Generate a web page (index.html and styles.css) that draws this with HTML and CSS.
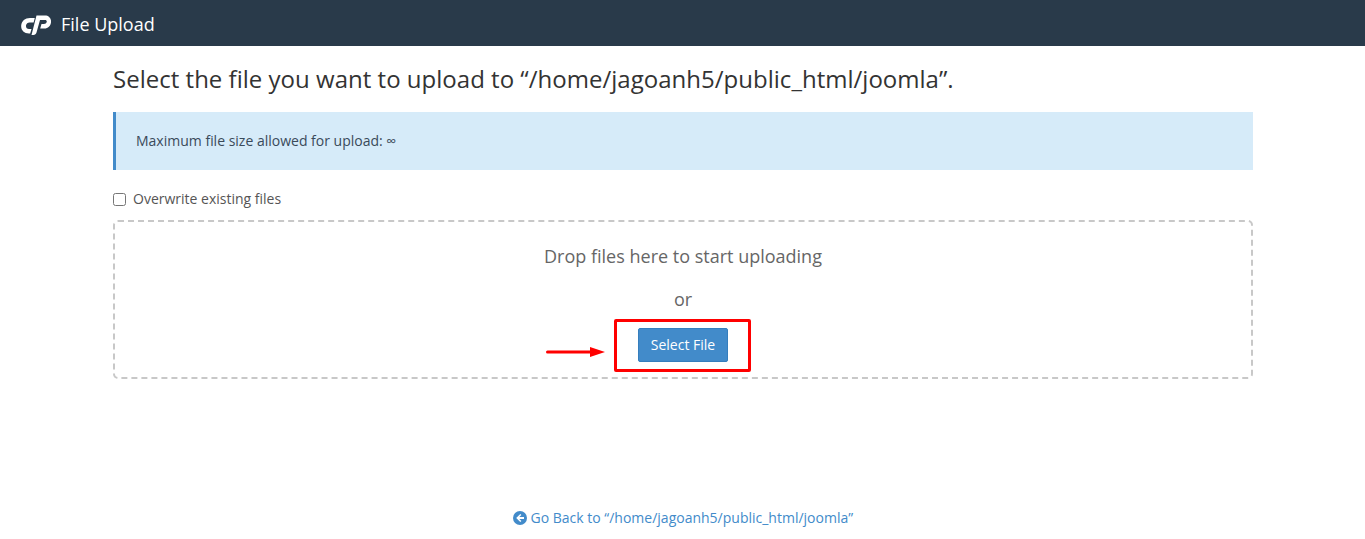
FILE: index.html
```html
<!DOCTYPE html>
<html lang="en">
<head>
  <meta charset="UTF-8" />
  <title>File Upload</title>
  <link rel="stylesheet" href="styles.css">
</head>
<body>
  <header class="topbar">
    <svg class="logo" viewBox="0 0 30 20" width="30" height="20" aria-hidden="true">
      <path fill="#fff" d="M13.800 3H9C4 3 .6 6 .2 10.500C-.2 15 3 18.500 8 18.500H9.200L10.500 14H8C6 14 4.800 12.500 5 10.500C5.300 8.800 6.800 7.500 8.500 7.500H12.600Z"/>
      <path fill="#fff" d="M10.500 20H12.500C14 20 15 19 15.500 17.500L19 5H24C25.500 5 26 6 25.700 7C25.400 8.300 24.300 9 23 9H20.500L19.200 13.500H23.500C27 13.500 29.500 11 30 7.500C30.500 3.500 28 .5 24 .5H15.500Z"/>
    </svg>
    <span class="topbar-title">File Upload</span>
  </header>

  <main class="content">
    <h1 class="heading">Select the file you want to upload to “/home/jagoanh5/public_html/joomla”.</h1>

    <div class="info-box">Maximum file size allowed for upload: ∞</div>

    <label class="overwrite">
      <input type="checkbox" />
      <span>Overwrite existing files</span>
    </label>

    <section class="dropzone">
      <div class="drop-text">Drop files here to start uploading</div>
      <div class="drop-or">or</div>
      <div class="button-row">
        <button class="select-btn">Select File</button>
        <span class="highlight"></span>
        <svg class="arrow" viewBox="0 0 60 10" width="60" height="10" aria-hidden="true">
          <rect x="0" y="3.500" width="46" height="3" rx="1.500" fill="#f00"/>
          <path d="M44 0 59 5 44 10z" fill="#f00"/>
        </svg>
      </div>
    </section>
  </main>

  <footer class="back">
    <a href="#">
      <svg class="back-icon" viewBox="0 0 14 14" width="14" height="14" aria-hidden="true">
        <circle cx="7" cy="7" r="7" fill="#428bca"/>
        <path d="M7.300 3 3.200 7l4.100 4 1.100-1.100L6.300 7.900h4.700V6.100H6.300l2.100-2z" fill="#fff"/>
      </svg>
      Go Back to “/home/jagoanh5/public_html/joomla”
    </a>
  </footer>
</body>
</html>
```

FILE: styles.css
```css
* {
  box-sizing: border-box;
}
body {
  margin: 0;
  font-family: "Open Sans", sans-serif;
  font-size: 14px;
  color: #333;
  background-color: #fff;
}
.topbar {
  display: flex;
  align-items: center;
  height: 46px;
  padding-left: 21px;
  background-color: #293a4a;
}
.logo {
  display: block;
  margin-top: 4px;
}
.topbar-title {
  margin-left: 10px;
  margin-top: 2px;
  color: #fff;
  font-size: 18px;
}
.content {
  width: 1140px;
  margin: 0 auto;
}
.heading {
  margin: 18px 0 18px;
  padding-left: 0.5px;
  font-size: 24px;
  font-weight: 400;
  line-height: 30px;
  letter-spacing: 0.015px;
}
.info-box {
  height: 58px;
  padding-left: 20.5px;
  line-height: 58px;
  border-left: 3px solid #428bca;
  background-color: #d6ebf9;
  color: #3a4a5a;
}
.overwrite {
  display: flex;
  align-items: center;
  margin-top: 18px;
  height: 20px;
  color: #555;
}
.overwrite input {
  width: 13px;
  height: 13px;
  margin: 2px 7.5px 0 0;
}
.dropzone {
  height: 159px;
  margin-top: 12px;
  border: 2px dashed #c8c8c8;
  border-radius: 5px;
  text-align: center;
  color: #666;
  font-size: 18px;
}
.drop-text {
  margin-top: 21px;
  padding-left: 1px;
  line-height: 26px;
}
.drop-or {
  margin-top: 17px;
  padding-left: 1px;
  line-height: 26px;
}
.button-row {
  position: relative;
  margin-top: 16px;
}
.select-btn {
  width: 90px;
  height: 34px;
  padding: 0 0 2px 1px;
  border: 1px solid #357ebd;
  border-radius: 2px;
  background-color: #428bca;
  color: #fff;
  font-family: inherit;
  font-size: 14px;
}
.highlight {
  position: absolute;
  left: 499px;
  top: -9px;
  width: 137px;
  height: 53px;
  border: 3px solid #f00;
  border-radius: 2px;
}
.arrow {
  position: absolute;
  left: 431px;
  top: 19px;
}
.back {
  margin-top: 129px;
  padding-left: 1px;
  text-align: center;
}
.back a {
  color: #428bca;
  text-decoration: none;
}
.back-icon {
  vertical-align: -2px;
}
```
